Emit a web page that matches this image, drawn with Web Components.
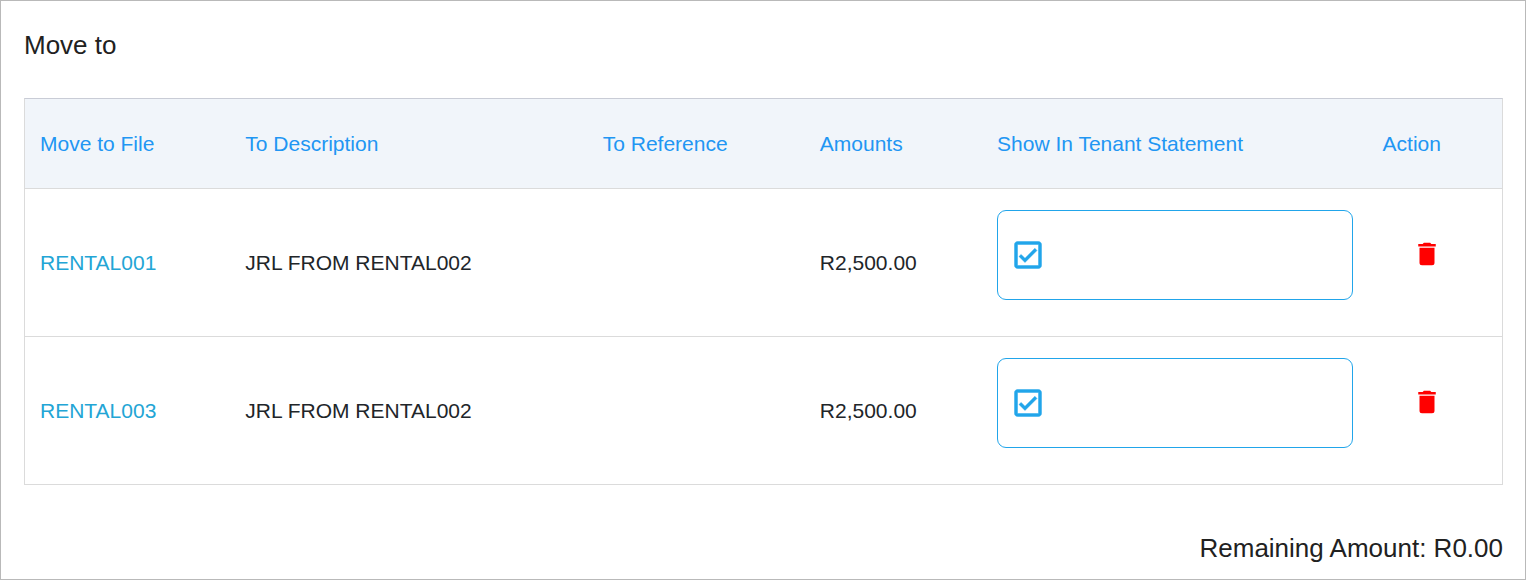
<!DOCTYPE html>
<html lang="en">
<head>
<meta charset="utf-8">
<meta name="viewport" content="width=device-width, initial-scale=1">
<title>Move to</title>
<style>
  body { margin: 0; background: #fff; color: #212121; font-family: "Liberation Sans", Arial, sans-serif; }
</style>
</head>
<body>
<move-panel>
  <span slot="title">Move to</span>
  <move-table></move-table>
  <span slot="total">Remaining Amount: R0.00</span>
</move-panel>

<script>
class MovePanel extends HTMLElement {
  constructor() {
    super();
    this.attachShadow({ mode: "open" }).innerHTML = `
      <style>
        :host { display: flex; flex-direction: column; box-sizing: border-box; min-height: 100vh;
                padding: 28px 22px 15px 23px; border: 1px solid #b9b9b9; }
        h2, p { margin: 0; font-size: 26px; line-height: 32px; font-weight: 400; }
        h2 { margin-bottom: 37px; }
        p { margin-top: 47px; text-align: right; }
      </style>
      <h2><slot name="title"></slot></h2>
      <slot></slot>
      <p><slot name="total"></slot></p>`;
  }
}

class StatementCheck extends HTMLElement {
  constructor() {
    super();
    this.attachShadow({ mode: "open" }).innerHTML = `
      <style>
        :host { display: block; padding: 6px 0 21px; }
        label { display: flex; align-items: center; box-sizing: border-box; height: 90px; padding: 0 12px;
                border: 1px solid #21a5ea; border-radius: 9px; cursor: pointer; }
        .box { display: grid; width: 36px; height: 36px; }
        input, svg { grid-area: 1 / 1; width: 36px; height: 36px; margin: 0; }
        input { appearance: none; cursor: pointer; }
        svg { fill: #21a5ea; stroke: #21a5ea; stroke-width: .3; pointer-events: none; }
        input:not(:checked) + svg .tick { display: none; }
      </style>
      <label><span class="box">
        <input type="checkbox" aria-label="Show In Tenant Statement" checked>
        <svg viewBox="0 0 24 24" aria-hidden="true">
          <path d="M19 3H5c-1.100 0-2 .9-2 2v14c0 1.100.9 2 2 2h14c1.100 0 2-.9 2-2V5c0-1.100-.9-2-2-2zm0 16H5V5h14v14z"/>
          <path class="tick" d="M17.990 9l-1.410-1.420-6.590 6.590-2.580-2.570-1.420 1.410 4 3.990z"/>
        </svg>
      </span></label>`;
  }
}

class DeleteAction extends HTMLElement {
  constructor() {
    super();
    this.attachShadow({ mode: "open" }).innerHTML = `
      <style>
        :host { display: block; padding-bottom: 17px; }
        button { display: flex; align-items: center; justify-content: center; width: 88px; height: 48px;
                 padding: 0; border: 0; background: none; cursor: pointer; }
        svg { width: 30px; height: 30px; fill: #f00; }
      </style>
      <button type="button" aria-label="Delete">
        <svg viewBox="0 0 24 24" aria-hidden="true">
          <path d="M19 4h-3.500l-1-1h-5l-1 1H5v2h14zM6 19a2 2 0 0 0 2 2h8a2 2 0 0 0 2-2V7H6z"/>
        </svg>
      </button>`;
  }
}

class MoveTable extends HTMLElement {
  constructor() {
    super();
    const rows = [
      ["RENTAL001", "JRL FROM RENTAL002", "", "R2,500.00"],
      ["RENTAL003", "JRL FROM RENTAL002", "", "R2,500.00"]
    ];
    this.attachShadow({ mode: "open" }).innerHTML = `
      <style>
        :host { display: block; }
        table { width: 100%; table-layout: fixed; border-collapse: separate; border-spacing: 0;
                border: 1px solid #dbdbdb; border-top-color: #c9ccd6; font-size: 21px; line-height: 23px; }
        th, td { padding: 15px; text-align: left; vertical-align: middle; font-weight: 400; }
        th { height: 59px; color: #2196f3; background: #f1f5fa; white-space: nowrap; }
        td { border-top: 1px solid #dbdbdb; color: #212529; }
        a { color: #23a5d5; text-decoration: none; }
        .file { width: 13.9%; } .desc { width: 24.2%; } .ref { width: 14.7%; }
        .amount { width: 12%; } .show { width: 26.1%; }
      </style>
      <table>
        <colgroup><col class="file"><col class="desc"><col class="ref"><col class="amount"><col class="show"><col></colgroup>
        <thead><tr>
          <th scope="col">Move to File</th><th scope="col">To Description</th><th scope="col">To Reference</th>
          <th scope="col">Amounts</th><th scope="col">Show In Tenant Statement</th><th scope="col">Action</th>
        </tr></thead>
        <tbody>${rows.map(([file, desc, ref, amount]) => `<tr>
          <td><a href="#${file}">${file}</a></td><td>${desc}</td><td>${ref}</td><td>${amount}</td>
          <td><statement-check></statement-check></td><td><delete-action></delete-action></td>
        </tr>`).join("")}</tbody>
      </table>`;
  }
}

customElements.define("statement-check", StatementCheck);
customElements.define("delete-action", DeleteAction);
customElements.define("move-table", MoveTable);
customElements.define("move-panel", MovePanel);
</script>
</body>
</html>
